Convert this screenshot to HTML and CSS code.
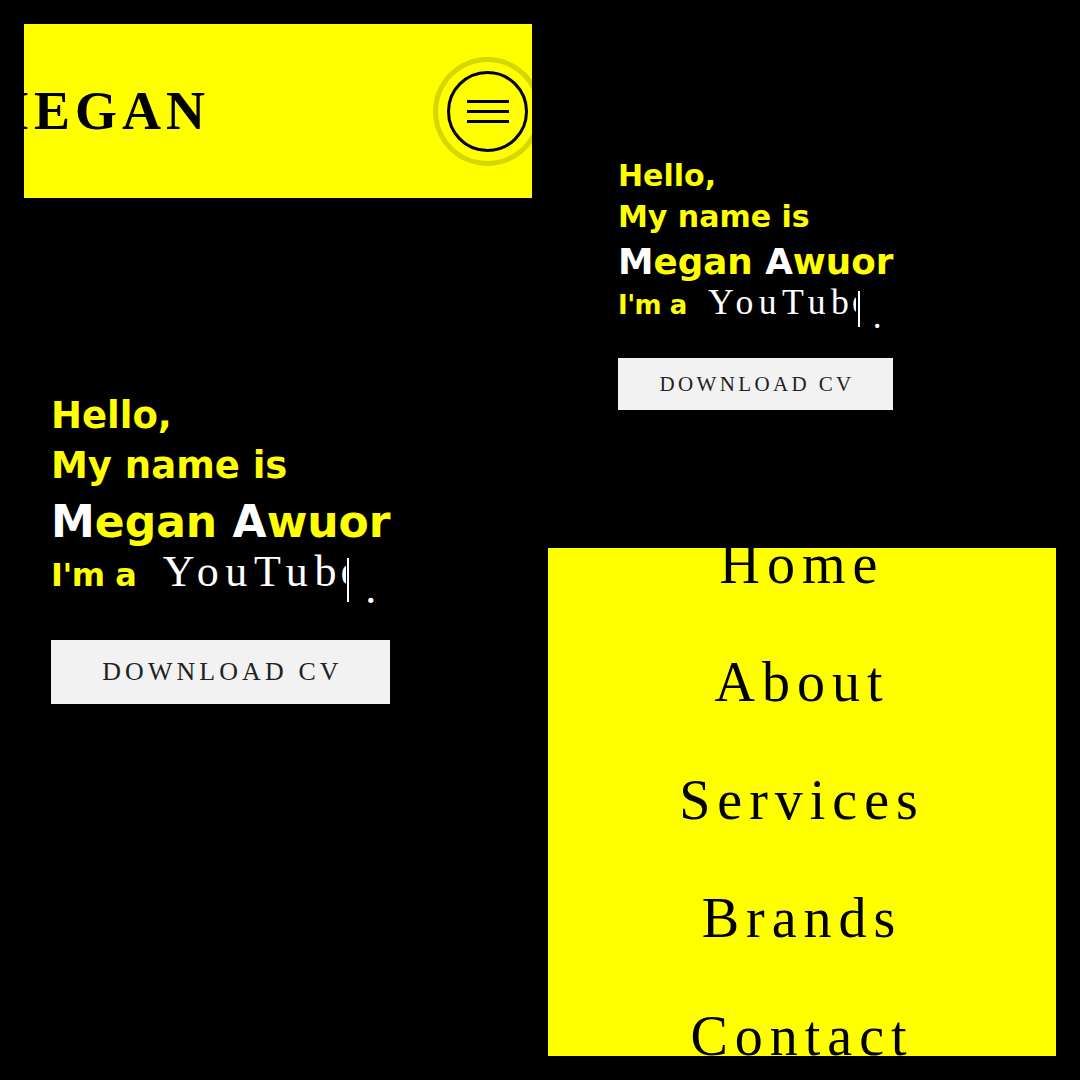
FILE: index.html
```html
<!DOCTYPE html>
<html lang="en">
  <head>
    <meta charset="UTF-8" />
    <meta name="viewport" content="width=device-width, initial-scale=1.0" />
    <title>Megan Awuor</title>
    <link rel="stylesheet" href="styles.css">
  </head>
  <body>
    <div class="column">
      <header class="topbar">
        <span class="logo">MEGAN</span>
        <button class="menu-toggle" aria-label="Open menu">
          <span></span>
          <span></span>
          <span></span>
        </button>
      </header>

      <section class="hero hero--large">
        <p class="hero-line">Hello,</p>
        <p class="hero-line">My name is</p>
        <h1 class="hero-name"><span class="light">M</span>egan <span class="light">A</span>wuor</h1>
        <p class="hero-role">I'm a <span class="typed">YouTub<span class="cut">e</span><span class="caret"></span><span class="dot">.</span></span></p>
        <button class="cv-btn">DOWNLOAD CV</button>
      </section>
    </div>

    <div class="column">
      <section class="hero hero--small">
        <p class="hero-line">Hello,</p>
        <p class="hero-line">My name is</p>
        <h1 class="hero-name"><span class="light">M</span>egan <span class="light">A</span>wuor</h1>
        <p class="hero-role">I'm a <span class="typed">YouTub<span class="cut">e</span><span class="caret"></span><span class="dot">.</span></span></p>
        <button class="cv-btn">DOWNLOAD CV</button>
      </section>

      <nav class="menu">
        <ul>
          <li><a href="#home">Home</a></li>
          <li><a href="#about">About</a></li>
          <li><a href="#services">Services</a></li>
          <li><a href="#brands">Brands</a></li>
          <li><a href="#contact">Contact</a></li>
        </ul>
      </nav>
    </div>
  </body>
</html>
```

FILE: styles.css
```css
body {
  margin: 0;
  padding: 24px;
  height: 100vh;
  box-sizing: border-box;
  background-color: #000;
  display: flex;
  gap: 16px;
  overflow: hidden;
}

.column {
  width: 508px;
  display: flex;
  flex-direction: column;
}

/* top bar with logo and round menu button */
.topbar {
  height: 174px;
  flex-shrink: 0;
  background-color: #ffff00;
  display: flex;
  align-items: center;
  justify-content: space-between;
  padding-right: 4px;
  overflow: hidden;
}

.logo {
  font-family: "Liberation Serif", serif;
  font-size: 54px;
  font-weight: bold;
  line-height: 1;
  letter-spacing: 5px;
  color: #000;
  margin-left: -46px;
}

.menu-toggle {
  width: 81px;
  height: 81px;
  border: 3px solid #000;
  border-radius: 50%;
  background: transparent;
  padding: 0;
  display: flex;
  flex-direction: column;
  align-items: center;
  justify-content: center;
  gap: 7px;
  box-shadow: 0 0 0 9px #ffff00, 0 0 0 14px #d6d600;
  cursor: pointer;
}

.menu-toggle span {
  width: 42px;
  height: 3px;
  background-color: #000;
}

/* hero text block, sized in em so both copies scale */
.hero {
  font-family: "DejaVu Sans", sans-serif;
  font-weight: bold;
  color: #ffff00;
}

.hero--large {
  font-size: 37px;
  margin: 193px 0 0 27px;
}

.hero--small {
  font-size: 30px;
  margin: 132px 0 0 70px;
}

.hero-line {
  margin: 0;
  font-size: 1em;
  line-height: 1.35;
}

.hero-name {
  margin: 0;
  font-size: 1.19em;
  line-height: 1.39;
}

.hero-name .light {
  color: #fff;
}

.hero-role {
  margin: -0.1em 0 0;
  font-size: 0.865em;
  line-height: 1.45;
  letter-spacing: -0.5px;
}

.typed {
  font-family: "Liberation Serif", serif;
  font-weight: normal;
  font-size: 1.375em;
  line-height: 1;
  letter-spacing: 0.15em;
  color: #fff;
  margin-left: 0.36em;
}

.cut {
  display: inline-block;
  width: 0.12em;
  overflow: hidden;
  line-height: 1;
  vertical-align: -0.16em;
  letter-spacing: 0;
  margin-left: -0.06em;
}

.caret {
  display: inline-block;
  width: 2px;
  height: 1em;
  background-color: #fff;
  vertical-align: -0.36em;
  margin-left: 0.04em;
}

.dot {
  letter-spacing: 0;
  margin-left: 0.36em;
  vertical-align: -0.38em;
}

.cv-btn {
  display: block;
  font-family: "Liberation Serif", serif;
  font-size: 0.7em;
  width: 13.08em;
  height: 2.5em;
  margin-top: 1.12em;
  padding: 0 0 0 0.16em;
  border: none;
  background-color: #f2f2f2;
  color: #222;
  letter-spacing: 0.16em;
  cursor: pointer;
}

/* opened menu panel */
.menu {
  margin-top: auto;
  height: 508px;
  flex-shrink: 0;
  background-color: #ffff00;
  overflow: hidden;
}

.menu ul {
  list-style: none;
  margin: -43px 0 0 0;
  padding: 0;
  text-align: center;
}

.menu a {
  display: block;
  font-family: "Liberation Serif", serif;
  font-size: 56px;
  line-height: 118px;
  letter-spacing: 7px;
  color: #000;
  text-decoration: none;
}
```
